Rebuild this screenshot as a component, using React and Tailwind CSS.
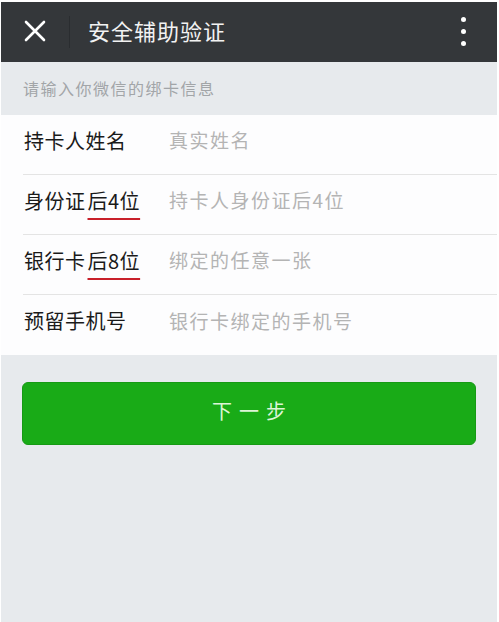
const fontCn = { fontFamily: '"Noto Sans CJK SC", "Noto Sans", sans-serif' };

const rows = [
  { label: "持卡人姓名", placeholder: "真实姓名" },
  { label: "身份证", mark: "后4位", placeholder: "持卡人身份证后4位" },
  { label: "银行卡", mark: "后8位", placeholder: "绑定的任意一张" },
  { label: "预留手机号", placeholder: "银行卡绑定的手机号" },
];

function Header() {
  return (
    <header className="flex items-center h-[60px] bg-[#34373a] text-white">
      <div className="w-[68px] h-full flex items-center justify-center pb-[2px]">
        <svg width="22" height="22" viewBox="0 0 22 22" fill="none" stroke="white" strokeWidth="2.6" strokeLinecap="round">
          <path d="M2 2 L20 20 M20 2 L2 20" />
        </svg>
      </div>
      <div className="w-px h-[32px] bg-[#2a2d30]" />
      <h1 className="flex-1 pl-[18px] pb-[4px] text-[22px] tracking-[1px] text-[#f2f2f2]">安全辅助验证</h1>
      <div className="w-[68px] h-full flex flex-col items-center justify-center gap-[7px] pl-[1px] pb-[2px]">
        <span className="w-[5px] h-[5px] rounded-full bg-white" />
        <span className="w-[5px] h-[5px] rounded-full bg-white" />
        <span className="w-[5px] h-[5px] rounded-full bg-white" />
      </div>
    </header>
  );
}

function Row({ label, mark, placeholder, last }) {
  return (
    <div className={`ml-[22px] flex items-center h-[60px] pb-[8px] ${last ? "" : "border-b border-[#e4e4e4]"}`}>
      <div className="w-[146px] text-[20px] text-[#1a1a1a] tracking-[0.5px] pl-[1px]">
        {label}
        <span className="ml-[2px] underline decoration-[#c8202a] decoration-[2px] underline-offset-[9px]">{mark}</span>
      </div>
      <div className="text-[19px] text-[#b4b4b4] tracking-[1.5px]">{placeholder}</div>
    </div>
  );
}

export default function App() {
  return (
    <div className="w-[499px] h-[622px] bg-white pt-[2px] pl-[1px] pr-[2px] overflow-hidden" style={fontCn}>
      <div className="h-full bg-[#e7eaed] flex flex-col">
        <Header />
        <div className="h-[52px] flex items-center pl-[22px] pb-[1px] text-[16px] tracking-[1.5px] text-[#a2a5a8]">
          请输入你微信的绑卡信息
        </div>
        <div className="bg-[#fdfdfe] mt-[1px]">
          {rows.map((r, i) => (
            <Row key={r.label} {...r} last={i === rows.length - 1} />
          ))}
        </div>
        <div className="px-[21px] pt-[27px]">
          <button className="w-full h-[63px] pb-[6px] rounded-[6px] bg-[#19ab17] border border-[#169a14] text-[#dcf5d6] text-[20px] tracking-[7px] pl-[7px]">
            下一步
          </button>
        </div>
      </div>
    </div>
  );
}
